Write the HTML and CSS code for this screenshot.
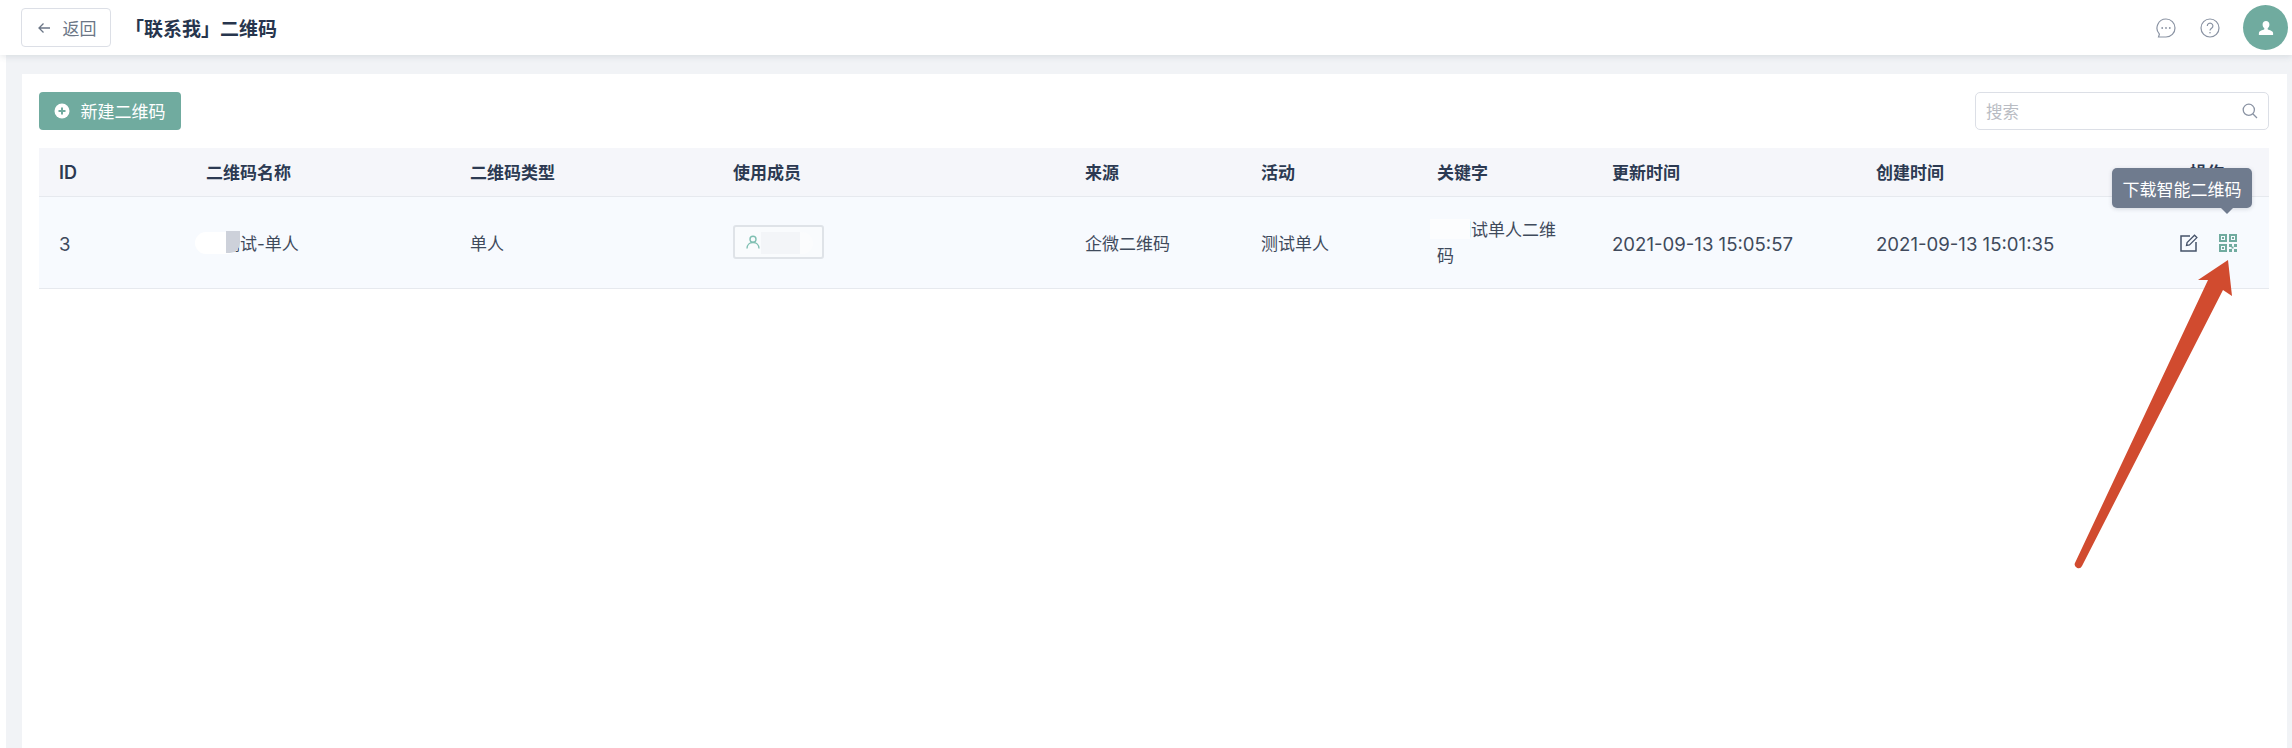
FILE: index.html
```html
<!DOCTYPE html>
<html lang="zh-CN">
<head>
<meta charset="utf-8">
<title>「联系我」二维码</title>
<link rel="stylesheet" href="styles.css">
</head>
<body>
<header class="topbar">
  <div class="topbar-left">
    <button class="back-btn">
      <svg class="back-icon" viewBox="0 0 14 14"><path d="M13 7H2M6.500 2.500 2 7l4.500 4.500" fill="none" stroke="currentColor" stroke-width="1.300"/></svg>
      <span>返回</span>
    </button>
    <h1 class="page-title">「联系我」二维码</h1>
  </div>
  <div class="topbar-right">
    <svg class="top-icon" viewBox="0 0 20 20"><path d="M10 1a9 9 0 0 1 0 18H2.500l.9-2.900A9 9 0 0 1 10 1z" fill="none" stroke="currentColor" stroke-width="1.200"/><circle cx="6.200" cy="10" r=".9" fill="currentColor"/><circle cx="10" cy="10" r=".9" fill="currentColor"/><circle cx="13.800" cy="10" r=".9" fill="currentColor"/></svg>
    <svg class="top-icon" viewBox="0 0 20 20"><circle cx="10" cy="10" r="9" fill="none" stroke="currentColor" stroke-width="1.200"/><path d="M7.300 8a2.800 2.800 0 1 1 4.300 2.300c-1 .7-1.600 1.200-1.600 2.300" fill="none" stroke="currentColor" stroke-width="1.200"/><circle cx="10" cy="14.800" r=".8" fill="currentColor"/></svg>
    <div class="avatar">
      <svg class="avatar-icon" viewBox="0 0 16 16"><path d="M8 1c2.100 0 3.400 1.500 3.400 3.500 0 1.600-.7 3-1.700 3.800v.9c0 .6 4.800 1.300 5.300 3.300.2.800.1 2.500.1 2.500H.9s-.1-1.700.1-2.500c.5-2 5.300-2.700 5.300-3.300v-.9C5.300 7.500 4.600 6.100 4.600 4.500 4.600 2.500 5.900 1 8 1z" fill="currentColor"/></svg>
    </div>
  </div>
</header>
<main class="content">
  <section class="card">
    <div class="toolbar">
      <button class="add-btn">
        <svg class="add-icon" viewBox="0 0 16 16"><circle cx="8" cy="8" r="7.500" fill="#fff"/><path d="M8 4.500v7M4.500 8h7" stroke="#70ab9f" stroke-width="2"/></svg>
        <span>新建二维码</span>
      </button>
      <div class="search">
        <span class="search-placeholder">搜索</span>
        <svg class="search-icon" viewBox="0 0 16 16"><circle cx="6.800" cy="6.800" r="5.600" fill="none" stroke="currentColor" stroke-width="1.300"/><path d="m11 11 4 4" stroke="currentColor" stroke-width="1.300"/></svg>
      </div>
    </div>
    <div class="table-wrap">
      <table class="data-table">
        <colgroup>
          <col class="c-id"><col class="c-name"><col class="c-type"><col class="c-member"><col class="c-source"><col class="c-activity"><col class="c-keyword"><col class="c-updated"><col class="c-created"><col class="c-op">
        </colgroup>
        <thead>
          <tr>
            <th class="id-head">ID</th><th>二维码名称</th><th>二维码类型</th><th>使用成员</th><th>来源</th><th>活动</th><th>关键字</th><th>更新时间</th><th>创建时间</th><th class="op-head">操作</th>
          </tr>
        </thead>
        <tbody>
          <tr>
            <td class="num">3</td>
            <td><span class="redacted-name">小测试-单人<i class="name-mask"></i><i class="name-mask-gray"></i></span></td>
            <td>单人</td>
            <td>
              <span class="member-tag">
                <svg class="member-icon" viewBox="0 0 14 14"><circle cx="7" cy="4.200" r="3" fill="none" stroke="currentColor" stroke-width="1.400"/><path d="M1 13.500c0-3.600 2.500-6 6-6s6 2.400 6 6" fill="none" stroke="currentColor" stroke-width="1.400"/></svg>
                <i class="member-mask"></i>
              </span>
            </td>
            <td>企微二维码</td>
            <td>测试单人</td>
            <td><div class="keyword">群测试单人二维码<i class="keyword-mask"></i></div></td>
            <td class="num">2021-09-13 15:05:57</td>
            <td class="num">2021-09-13 15:01:35</td>
            <td>
              <div class="ops">
                <svg class="op-icon" viewBox="0 0 18 18"><path d="M10 2H1v15h15V8" fill="none" stroke="#46536a" stroke-width="1.500"/><path d="m6.500 11.500.6-3L14.500 1.200l2.400 2.400-7.400 7.300z" fill="none" stroke="#46536a" stroke-width="1.300"/></svg>
                <svg class="op-icon" viewBox="0 0 18 18"><g fill="none" stroke="#70ab9f" stroke-width="2"><rect x="1" y="1" width="6" height="6"/><rect x="11" y="1" width="6" height="6"/><rect x="1" y="11" width="6" height="6"/></g><g fill="#70ab9f"><rect x="3" y="3" width="2" height="2"/><rect x="13" y="3" width="2" height="2"/><rect x="3" y="13" width="2" height="2"/><rect x="10" y="10" width="3" height="3"/><rect x="15" y="10" width="3" height="3"/><rect x="10" y="15" width="3" height="3"/><rect x="15" y="15" width="3" height="3"/><rect x="12.500" y="12.500" width="2" height="2"/></g></svg>
              </div>
            </td>
          </tr>
        </tbody>
      </table>
      <div class="tooltip">下载智能二维码</div>
    </div>
  </section>
</main>
<svg class="annotation-arrow" viewBox="0 0 2292 748"><path d="M2228 260 2232 296 2223 290 2082 566a3.800 3.800 0 0 1-6.800-3.500L2208 280 2198 280z" fill="#d14b2f"/></svg>
</body>
</html>
```
FILE: styles.css
```css
* { box-sizing: border-box; }
html, body { margin: 0; height: 100%; }
body {
  position: relative;
  width: 2292px;
  height: 748px;
  overflow: hidden;
  background: #fff;
  color: #3f4a5c;
  font-family: Inter, "Noto Sans CJK SC", sans-serif;
  font-size: 17px;
}
.topbar {
  position: relative;
  z-index: 1;
  height: 55px;
  display: flex;
  align-items: center;
  justify-content: space-between;
  padding: 0 4px 0 21px;
  background: #fff;
  box-shadow: 0 2px 6px rgba(60, 70, 90, .12);
}
.topbar-left { display: flex; align-items: center; }
.back-btn {
  width: 90px;
  height: 39px;
  display: flex;
  align-items: center;
  justify-content: center;
  gap: 12px;
  padding: 0 0 0 1px;
  background: #fff;
  border: 1px solid #dcdfe6;
  border-radius: 4px;
  color: #6b7686;
  font: inherit;
}
.back-icon { width: 14px; height: 14px; }
.page-title {
  margin: 0 0 0 14px;
  font-size: 19px;
  font-weight: 700;
  color: #27354d;
}
.topbar-right { display: flex; align-items: center; }
.top-icon { width: 20px; height: 20px; margin-right: 24px; color: #8a93a3; }
.top-icon + .top-icon { margin-right: 23px; }
.avatar {
  width: 45px;
  height: 45px;
  border-radius: 50%;
  background: #70ab9f;
  display: flex;
  align-items: center;
  justify-content: center;
}
.avatar-icon { width: 16px; height: 16px; color: #fff; }
.content {
  height: 693px;
  margin-left: 6px;
  padding: 19px 5px 0 16px;
  background: #f1f3f6;
}
.card {
  height: 100%;
  padding: 18px 18px 0 17px;
  background: #fff;
}
.toolbar {
  display: flex;
  align-items: center;
  justify-content: space-between;
  margin-bottom: 18px;
}
.add-btn {
  width: 142px;
  height: 38px;
  display: flex;
  align-items: center;
  justify-content: center;
  gap: 11px;
  padding: 0 1px 2px 0;
  border: 0;
  border-radius: 4px;
  background: #70ab9f;
  color: #fff;
  font: inherit;
}
.add-icon { width: 16px; height: 16px; margin-top: 2px; }
.search {
  width: 294px;
  height: 38px;
  display: flex;
  align-items: center;
  justify-content: space-between;
  padding: 0 10px;
  border: 1px solid #dcdfe6;
  border-radius: 5px;
  background: #fff;
}
.search-placeholder { font-size: 16.500px; color: #b9bcc3; }
.search-icon { width: 16px; height: 16px; color: #8a93a3; }
.table-wrap { position: relative; }
.data-table {
  width: 2230px;
  table-layout: fixed;
  border-collapse: collapse;
}
.c-id { width: 147px; }
.c-name { width: 264px; }
.c-type { width: 263px; }
.c-member { width: 352px; }
.c-source { width: 176px; }
.c-activity { width: 176px; }
.c-keyword { width: 175px; }
.c-updated { width: 264px; }
.c-created { width: 264px; }
.c-op { width: 149px; }
.data-table th {
  height: 48px;
  padding: 0 20px;
  background: #f5f6fa;
  border-bottom: 1px solid #e6e9ee;
  text-align: left;
  font-weight: 600;
  color: #2c3a52;
}
.data-table th.id-head { padding-top: 2px; font-size: 18px; }
.data-table th.op-head { padding-left: 70px; }
.data-table td {
  height: 92px;
  padding: 4px 20px 0;
  background: #f7fafe;
  border-bottom: 1px solid #e6e9ee;
  line-height: 26px;
}
.data-table td.num { font-size: 18.600px; }
.redacted-name { position: relative; display: inline-block; }
.name-mask {
  position: absolute;
  left: -11px;
  top: 1px;
  width: 36px;
  height: 22px;
  border-radius: 11px 0 0 11px;
  background: #fff;
}
.name-mask-gray {
  position: absolute;
  left: 20px;
  top: 0;
  width: 14px;
  height: 22px;
  border-radius: 0 0 10px 0;
  background: #cdd1da;
}
.member-tag {
  position: relative;
  width: 91px;
  height: 34px;
  display: flex;
  align-items: center;
  padding-left: 11px;
  margin-top: -4px;
  border: 2px solid #dfe3e8;
  border-radius: 3px;
  background: #f9fbfd;
}
.member-icon { width: 14px; height: 14px; color: #7fbfb2; }
.member-mask {
  position: absolute;
  left: 26px;
  top: 5px;
  width: 52px;
  height: 22px;
  border-radius: 0 11px 11px 0;
  background: linear-gradient(90deg, #f3f5f8 75%, #fbfcfd 75%);
}
.keyword { position: relative; width: 130px; margin-top: -3px; }
.keyword-mask {
  position: absolute;
  left: -7px;
  top: 2px;
  width: 40px;
  height: 20px;
  background: #fcfdfe;
}
.ops {
  display: flex;
  justify-content: flex-end;
  gap: 21px;
  padding-right: 12px;
  margin-top: -3px;
}
.op-icon { width: 18px; height: 18px; display: block; }
.tooltip {
  position: absolute;
  left: 2073px;
  top: 20px;
  width: 140px;
  height: 40px;
  display: flex;
  align-items: center;
  justify-content: center;
  border-radius: 5px;
  background: #6f7b8e;
  color: #fff;
  box-shadow: 0 1px 4px rgba(60, 70, 90, .2);
}
.tooltip::after {
  content: "";
  position: absolute;
  left: 109px;
  top: 40px;
  border: 6px solid transparent;
  border-top-color: #6f7b8e;
  border-bottom: 0;
}
.annotation-arrow {
  position: absolute;
  left: 0;
  top: 0;
  width: 2292px;
  height: 748px;
  pointer-events: none;
  z-index: 2;
}
```
